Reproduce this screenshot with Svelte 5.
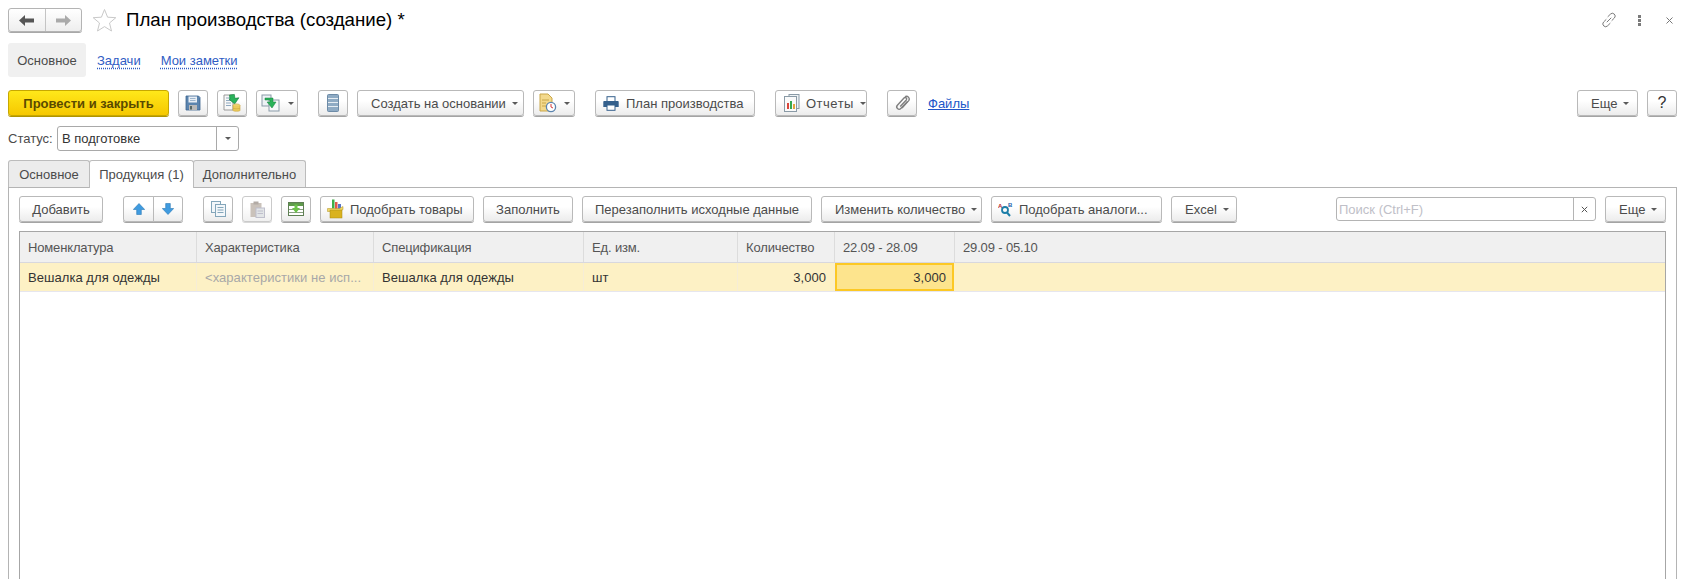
<script>
  const columns = [
    { label: 'Номенклатура', cls: 'c1' },
    { label: 'Характеристика', cls: 'c2' },
    { label: 'Спецификация', cls: 'c3' },
    { label: 'Ед. изм.', cls: 'c4' },
    { label: 'Количество', cls: 'c5' },
    { label: '22.09 - 28.09', cls: 'c6' },
    { label: '29.09 - 05.10', cls: 'c7' }
  ];
</script>

{#snippet caret()}
  <svg class="caret" width="6" height="3" viewBox="0 0 6 3"><path d="M0 0h6L3 3z" fill="#5a5a5a"/></svg>
{/snippet}

<div class="page">
  <header class="titlebar">
    <div class="nav">
      <button class="navbtn" aria-label="Назад">
        <svg width="15" height="11" viewBox="0 0 15 11"><path d="M0 5.500 6 0v3.500h9v4H6V11z" fill="#555"/></svg>
      </button>
      <button class="navbtn" aria-label="Вперед">
        <svg width="15" height="11" viewBox="0 0 15 11"><path d="M15 5.500 9 0v3.500H0v4h9V11z" fill="#aaa"/></svg>
      </button>
    </div>
    <svg class="star" width="25" height="24" viewBox="0 0 25 24"><path d="M12.500 1.500 15.600 9.200 23.800 9.700 17.500 15 19.500 23 12.500 18.600 5.500 23 7.500 15 1.200 9.700 9.400 9.200z" fill="#fff" stroke="#c9c9c9" stroke-width="1"/></svg>
    <h1>План производства (создание) *</h1>
    <div class="wincontrols">
      <svg width="16" height="16" viewBox="0 0 18 18" fill="none" stroke="#777" stroke-width="1.100"><path d="M7.500 5.500 10.500 2.500a3 3 0 0 1 4.600 4.200L12 9.800"/><path d="M10.500 12.500 7.500 15.500a3 3 0 0 1-4.600-4.200L6 8.200"/><path d="M6.500 11.500 11.500 6.500"/></svg>
      <svg width="3" height="11" viewBox="0 0 3 11"><g fill="#7a7a7a"><rect width="3" height="3"/><rect y="4" width="3" height="3"/><rect y="8" width="3" height="3"/></g></svg>
      <svg width="7" height="7" viewBox="0 0 7 7"><path d="M.5.500l6 6M6.500.500l-6 6" stroke="#777" stroke-width="1"/></svg>
    </div>
  </header>

  <nav class="sections">
    <span class="section active">Основное</span>
    <span class="section link">Задачи</span>
    <span class="section link">Мои заметки</span>
  </nav>

  <div class="toolbar main">
    <button class="btn primary w161">Провести и закрыть</button>
    <button class="btn icon" aria-label="Записать">
      <svg width="16" height="16" viewBox="0 0 16 16"><path d="M1 1h12.500L15 2.500V15H1z" fill="#5b84ae" stroke="#3e658f" stroke-width=".8"/><rect x="3.500" y="1.500" width="8.500" height="6" fill="#e8eef5"/><path d="M5 3.500h5.500M5 5.500h5.500" stroke="#9db5cd"/><rect x="4" y="10" width="8" height="5" fill="#b8b8b8"/><rect x="5" y="11" width="2" height="3.500" fill="#566"/></svg>
    </button>
    <button class="btn icon" aria-label="Провести">
      <svg width="20" height="20" viewBox="0 0 20 20"><path d="M2 2h9v15H2z" fill="#f8f8f8" stroke="#9a9a9a"/><path d="M4 5h5M4 7.500h5M4 10h5M4 12.500h5" stroke="#90a9c0"/><path d="M8 1.500h5v4h4L12 11 7 5.500h1z" fill="#2ab25a" stroke="#14803c" stroke-width=".6" transform="rotate(-8 12 6)"/><ellipse cx="14.500" cy="12.500" rx="3.500" ry="1.600" fill="#f1d676" stroke="#c9a238" stroke-width=".6"/><path d="M11 12.500v5c0 1 7 1 7 0v-5" fill="#eccb5c" stroke="#c9a238" stroke-width=".6"/><path d="M11 15c0 1 7 1 7 0" fill="none" stroke="#c9a238" stroke-width=".6"/></svg>
    </button>
    <button class="btn iconcaret w42" aria-label="Структура">
      <svg width="20" height="18" viewBox="0 0 20 18"><rect x="1" y="1" width="9" height="11" fill="#eef2f6" stroke="#8a9ba8"/><rect x="8" y="6" width="10" height="11" fill="#f6f8fa" stroke="#8a9ba8"/><path d="M4 4h8v4h3l-4 6-5-6h3V6H4z" fill="#2ab25a" stroke="#14803c" stroke-width=".5"/></svg>
      {@render caret()}
    </button>
    <button class="btn icon gap-l" aria-label="Список">
      <svg width="12" height="18" viewBox="0 0 12 18"><rect x=".5" y=".5" width="11" height="17" rx="1" fill="#8fabc4" stroke="#6d8ba7"/><path d="M1 4.500h10M1 8.500h10M1 12.500h10" stroke="#e6edf3"/></svg>
    </button>
    <button class="btn drop w167">Создать на основании {@render caret()}</button>
    <button class="btn iconcaret w42" aria-label="История">
      <svg width="18" height="20" viewBox="0 0 18 20"><path d="M1 1h8l4 4v13H1z" fill="#f3d98c" stroke="#c9a648"/><path d="M3 7h7M3 10h4M3 13h4" stroke="#c9a648"/><circle cx="12" cy="14" r="4.600" fill="#fff" stroke="#5b84ae" stroke-width="1.300"/><path d="M12 11v3l2 1" stroke="#d63b3b" fill="none"/></svg>
      {@render caret()}
    </button>
    <button class="btn withicon w160 gap-l">
      <svg width="16" height="15" viewBox="0 0 16 15"><rect x="4" y="0.700" width="8" height="5" fill="#fff" stroke="#35608c"/><path d="M1 5h14a1 1 0 0 1 .7.7V11H12V9H4v2H.3V5.700A1 1 0 0 1 1 5z" fill="#35608c"/><rect x="4" y="9" width="8" height="5.300" fill="#fff" stroke="#35608c"/></svg>
      <span>План производства</span>
    </button>
    <button class="btn withicon reports gap-l">
      <svg width="16" height="18" viewBox="0 0 16 18"><rect x="5" y="0.500" width="10" height="14" fill="#eef2f5" stroke="#8a9aa6"/><rect x="0.500" y="2.500" width="12" height="15" fill="#fafafa" stroke="#8a9aa6"/><rect x="3" y="9" width="2" height="6" fill="#d9463c"/><rect x="6" y="7" width="2" height="8" fill="#36a84f"/><rect x="9" y="10" width="2" height="5" fill="#e6a23c"/></svg>
      <span>Отчеты</span>
      {@render caret()}
    </button>
    <button class="btn icon w30 gap-l" aria-label="Вложения">
      <svg width="16" height="17" viewBox="0 0 16 17" fill="none" stroke="#7f7f7f" stroke-width="1.400"><path d="M13.500 6.500 6.800 13.500a2.300 2.300 0 0 1-3.400-3.200L10 3a1.500 1.500 0 0 1 2.300 2L6.200 11.600"/><path d="M11 1.600a2.800 2.800 0 0 1 3.700 4L8 13"/></svg>
    </button>
    <span class="files">Файлы</span>
    <div class="spacer"></div>
    <button class="btn drop w61">Еще {@render caret()}</button>
    <button class="btn help" aria-label="Справка">?</button>
  </div>

  <div class="status">
    <label for="st">Статус:</label>
    <div class="combo">
      <span id="st">В подготовке</span>
      <span class="combo-btn">{@render caret()}</span>
    </div>
  </div>

  <div class="tabs">
    <span class="tab t1">Основное</span>
    <span class="tab t2 active">Продукция (1)</span>
    <span class="tab t3">Дополнительно</span>
  </div>

  <section class="panel">
    <div class="toolbar sub">
      <button class="btn w84">Добавить</button>
      <div class="btngroup gap-l">
        <button class="btn seg" aria-label="Вверх">
          <svg width="12" height="12" viewBox="0 0 12 12"><path d="M6 .5 11.700 6.500H8.300v5H3.700v-5H.3z" fill="#3f9be0" stroke="#2a78b4" stroke-width=".6"/></svg>
        </button>
        <button class="btn seg" aria-label="Вниз">
          <svg width="12" height="12" viewBox="0 0 12 12"><path d="M6 11.500 11.700 5.500H8.300v-5H3.700v5H.3z" fill="#3f9be0" stroke="#2a78b4" stroke-width=".6"/></svg>
        </button>
      </div>
      <button class="btn icon gap-l" aria-label="Копировать">
        <svg width="15" height="16" viewBox="0 0 15 16" fill="#f3f7fa" stroke="#84a6ba"><rect x=".5" y=".5" width="9" height="11"/><rect x="4.500" y="3.500" width="10" height="12"/><path d="M6.500 6.500h6M6.500 9h6M6.500 11.500h6" fill="none"/></svg>
      </button>
      <button class="btn icon disabled" aria-label="Вставить">
        <svg width="15" height="17" viewBox="0 0 15 17"><rect x=".5" y="2" width="11" height="14" fill="#b9aea4"/><rect x="3.500" y="0.500" width="5" height="3" fill="#9a9088"/><rect x="6" y="7" width="8.500" height="9.500" fill="#d9dde0" stroke="#aab"/><path d="M7.500 10h5.500M7.500 12.500h5.500" stroke="#aab"/></svg>
      </button>
      <button class="btn icon" aria-label="Заполнить">
        <svg width="16" height="14" viewBox="0 0 16 14"><rect x=".5" y=".5" width="15" height="13" fill="#fff" stroke="#5f7f54"/><rect x="1" y="1" width="14" height="3" fill="#5f9a4c"/><path d="M1 7.500h14M1 10.500h14" stroke="#88a080"/><path d="M6.500 2.500h3v3.500H12L8 11 4 6h2.500z" fill="#6cc24a"/></svg>
      </button>
      <button class="btn withicon w154 tight">
        <svg width="17" height="20" viewBox="0 0 17 20"><rect x="5" y="0.500" width="2.500" height="9" fill="#3fae49"/><rect x="8" y="3" width="2.500" height="7" fill="#e2574c"/><rect x="11" y="5" width="3" height="5" fill="#5876c8"/><path d="M0.500 9.500h12l3.500-2v3l-3.500 2h-12z" fill="#f0d968" stroke="#b08f1c" stroke-width=".5"/><rect x="3" y="11" width="12" height="8" fill="#d9b21e" stroke="#a98a16" stroke-width=".5"/></svg>
        <span>Подобрать товары</span>
      </button>
      <button class="btn w90">Заполнить</button>
      <button class="btn w230">Перезаполнить исходные данные</button>
      <button class="btn drop w161b">Изменить количество {@render caret()}</button>
      <button class="btn withicon w171 tight">
        <svg width="15" height="15" viewBox="0 0 15 15"><text x="0" y="5.500" class="glyph red">A</text><text x="10" y="5" class="glyph blue">B</text><circle cx="7" cy="8" r="3" fill="none" stroke="#1c7ea8" stroke-width="1.800"/><path d="M9 10.500 12 14" stroke="#1c7ea8" stroke-width="2"/></svg>
        <span>Подобрать аналоги...</span>
      </button>
      <button class="btn drop w66">Excel {@render caret()}</button>
      <div class="spacer"></div>
      <div class="search">
        <span class="ph">Поиск (Ctrl+F)</span>
        <span class="search-x">
          <svg width="7" height="7" viewBox="0 0 7 7"><path d="M.8.8l5.400 5.400M6.200.8.8 6.200" stroke="#555" stroke-width="1"/></svg>
        </span>
      </div>
      <button class="btn drop w61 more">Еще {@render caret()}</button>
    </div>

    <div class="table">
      <div class="thead">
        {#each columns as col}
          <div class="th {col.cls}">{col.label}</div>
        {/each}
      </div>
      <div class="tr">
        <div class="td c1">Вешалка для одежды</div>
        <div class="td c2 muted">&lt;характеристики не исп...</div>
        <div class="td c3">Вешалка для одежды</div>
        <div class="td c4">шт</div>
        <div class="td c5 num">3,000</div>
        <div class="td c6 num selected">3,000</div>
        <div class="td c7"></div>
      </div>
    </div>
  </section>
</div>

<style>
  :global(body) { margin: 0; background: #fff; overflow: hidden; }
  .page {
    height: 579px; overflow: hidden; display: flex; flex-direction: column;
    font: 13px/1 "Liberation Sans", Arial, sans-serif; color: #4b4b4b;
    padding: 8px 16px 0 8px; box-sizing: border-box;
  }
  button { font: inherit; color: inherit; margin: 0; }
  svg { flex: none; }

  .titlebar { display: flex; align-items: center; height: 24px; }
  .nav { display: flex; width: 74px; height: 24px; box-sizing: border-box; border: 1px solid #b4b4b4; border-radius: 3px; box-shadow: 0 1px 0 #a8a8a8; background: linear-gradient(#fff, #eee); }
  .navbtn { flex: 1; border: 0; background: none; padding: 0; display: flex; align-items: center; justify-content: center; }
  .navbtn + .navbtn { border-left: 1px solid #c4c4c4; }
  .star { margin-left: 10px; }
  h1 { margin: 0 0 0 9px; font-size: 18.67px; font-weight: 400; color: #000; }
  .wincontrols { margin-left: auto; display: flex; align-items: center; margin-right: 4px; }
  .wincontrols svg + svg { margin-left: 21px; }
  .wincontrols svg:last-child { margin-left: 25px; }

  .sections { display: flex; align-items: center; height: 34px; margin-top: 11px; }
  .section { display: flex; align-items: center; height: 34px; }
  .section.active { width: 78px; justify-content: center; background: #f0f0f0; border-radius: 3px; color: #4b4b4b; }
  .section.link { color: #2f5cc4; margin-left: 11px; margin-right: -1px; text-decoration: underline dotted #2f5cc4; text-underline-offset: 3px; }
  .section.link:nth-child(3) { margin-left: 21px; }

  .toolbar { display: flex; align-items: flex-start; gap: 9px; }
  .toolbar.main { margin-top: 13px; height: 27px; }
  .spacer { flex: 1; }
  .gap-l { margin-left: 11px; }

  .btn {
    height: 26px; box-sizing: border-box; padding: 0; flex: none;
    display: flex; align-items: center; justify-content: center; gap: 5px;
    border: 1px solid #b9b9b9; border-radius: 3px; background: linear-gradient(#fff 40%, #ececec);
    box-shadow: 0 1px 0 #a4a4a4; color: #4b4b4b; white-space: nowrap;
  }
  .btn.primary { background: linear-gradient(#ffe81a, #f6c800); border-color: #c7a800; box-shadow: 0 1px 0 #b09400; color: #5a4a00; font-weight: 700; }
  .btn.drop { justify-content: flex-start; padding-left: 13px; gap: 6px; }
  .btn.icon { width: 30px; }
  .btn.iconcaret { gap: 7px; }
  .btn.withicon { gap: 7px; justify-content: flex-start; padding-left: 7px; }
  .btn.withicon.tight { padding-left: 6px; gap: 6px; }
  .btn.withicon.reports { width: 92px; padding-left: 8px; gap: 6px; }
  .reports span { letter-spacing: .5px; }
  .btn.disabled { opacity: .75; box-shadow: 0 1px 0 #ccc; }
  .w161 { width: 161px; } .w42 { width: 42px; } .w167 { width: 167px; }
  .w160 { width: 160px; } .btn.w30 { width: 30px; } .w61 { width: 61px; }
  .w84 { width: 84px; } .w154 { width: 154px; } .w90 { width: 90px; } .w230 { width: 230px; }
  .w161b { width: 161px; } .w171 { width: 171px; } .w66 { width: 66px; }
  .help { width: 30px; font-size: 16px; color: #333; }
  .caret { flex: none; }
  .files { color: #2056c8; text-decoration: underline; align-self: center; margin-left: 2px; margin-top: -1px; }

  .status { display: flex; align-items: center; height: 25px; margin-top: 9px; gap: 6px; }
  .status label { width: 43px; }
  .combo { width: 182px; height: 25px; box-sizing: border-box; border: 1px solid #a9a9a9; border-radius: 3px; display: flex; align-items: center; padding-left: 4px; color: #333; }
  .combo #st { flex: 1; }
  .combo-btn { width: 21px; height: 100%; border-left: 1px solid #a9a9a9; display: flex; align-items: center; justify-content: center; }

  .tabs { display: flex; height: 28px; margin-top: 9px; position: relative; z-index: 1; }
  .tab { height: 27px; box-sizing: border-box; border: 1px solid #bcbcbc; border-bottom: 0; border-radius: 3px 3px 0 0; background: #ececec; display: flex; align-items: center; justify-content: center; margin-right: -1px; }
  .tab.t1 { width: 82px; }
  .tab.t2 { width: 105px; height: 28px; background: #fff; }
  .tab.t3 { width: 113px; }

  .panel { flex: 1; margin-top: -1px; border: 1px solid #b4b4b4; border-bottom: 0; padding: 8px 10px 0; min-height: 0; display: flex; flex-direction: column; }
  .toolbar.sub { height: 27px; margin-bottom: 8px; }
  .btngroup { display: flex; }
  .btn.seg { width: 31px; border-radius: 3px 0 0 3px; }
  .btn.seg + .btn.seg { width: 30px; margin-left: -1px; border-radius: 0 3px 3px 0; }
  .glyph { font: 700 6px "Liberation Sans", sans-serif; }
  .red { fill: #b5282c; } .blue { fill: #1b5faa; }

  .search { width: 260px; height: 24px; margin-top: 1px; box-sizing: border-box; border: 1px solid #b4b4b4; border-radius: 3px; display: flex; align-items: center; padding-left: 2px; }
  .ph { flex: 1; color: #c0c0c8; }
  .search-x { width: 21px; height: 100%; border-left: 1px solid #b4b4b4; display: flex; align-items: center; justify-content: center; }

  .table { flex: 1; border: 1px solid #a6a6a6; border-bottom: 0; box-sizing: border-box; }
  .thead, .tr { display: flex; }
  .thead { height: 30px; background: #f0f0f0; border-bottom: 1px solid #d8d8de; }
  .tr { height: 28px; background: #fdf1c5; border-bottom: 1px solid #e6e6ee; }
  .th, .td { box-sizing: border-box; height: 100%; display: flex; align-items: center; padding: 0 8px; flex: none; border-right: 1px solid #dcdcdc; white-space: nowrap; }
  .th { color: #555; letter-spacing: -.15px; }
  .td { color: #333; border-right-color: #f6edd6; letter-spacing: .05px; }
  .c1 { width: 177px; } .c2 { width: 177px; } .c3 { width: 210px; } .c4 { width: 154px; }
  .c5 { width: 97px; } .c6 { width: 120px; } .c7 { flex: 1; border-right: 0; }
  .muted { color: #a8a8a8; }
  .num { justify-content: flex-end; }
  .td.selected { width: 119px; margin-right: 1px; background: #fde48d; border: 2px solid #fcc824; padding-right: 6px; }
</style>
